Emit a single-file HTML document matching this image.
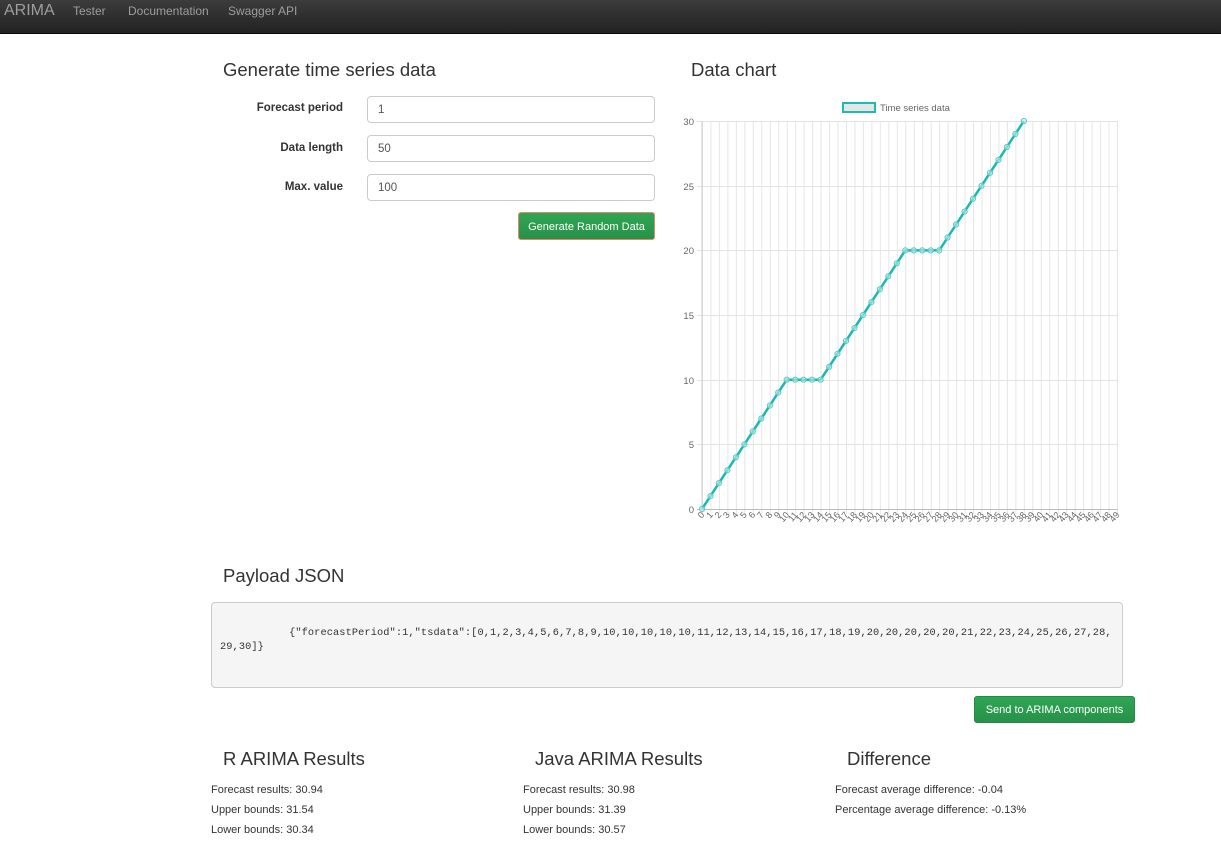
<!DOCTYPE html>
<html><head><meta charset="utf-8"><style>
body{margin:0;width:1221px;height:843px;background:#fff;font-family:"Liberation Sans",sans-serif;color:#333;position:relative;overflow:hidden}
.nav{position:absolute;left:0;top:0;width:1221px;height:33px;background:linear-gradient(#3c3c3c,#222);border-bottom:1px solid #080808}
.nav span{position:absolute;top:4px;color:#9d9d9d;font-size:12px}
.a{position:absolute;white-space:nowrap}
h2{position:absolute;margin:0;font-weight:normal;font-size:18.5px;color:#333;white-space:nowrap}
.lbl{position:absolute;font-size:11.5px;font-weight:bold;width:130px;text-align:right;left:213px}
.in{position:absolute;left:367px;width:286px;height:25px;border:1px solid #ccc;border-radius:4px;font-size:11.5px;line-height:27px;text-indent:10px;color:#555}
.btn{position:absolute;color:#fff;font-size:11px;text-align:center;border-radius:3px;background:linear-gradient(#2fa653,#27914a);border:1px solid #25874a}
.r{position:absolute;font-size:11px;color:#333}
</style></head><body>
<div class="nav">
<span style="left:4px;top:2px;font-size:16px;">ARIMA</span>
<span style="left:73px">Tester</span>
<span style="left:128px">Documentation</span>
<span style="left:228px">Swagger API</span>
</div>
<h2 style="left:223px;top:59px">Generate time series data</h2>
<h2 style="left:691px;top:59px">Data chart</h2>
<div class="lbl" style="top:102px">Forecast period</div>
<div class="lbl" style="top:142px">Data length</div>
<div class="lbl" style="top:181px">Max. value</div>
<div class="in" style="top:96px">1</div>
<div class="in" style="top:135px">50</div>
<div class="in" style="top:174px">100</div>
<div class="btn" style="left:518px;top:212px;width:135px;height:26px;line-height:28px;border-color:#e08a6a">Generate Random Data</div>

<svg style="position:absolute;left:680px;top:95px" width="450" height="440" viewBox="680 95 450 440">
<defs>
<pattern id="vg" patternUnits="userSpaceOnUse" x="702" y="0" width="8.4694" height="10"><line x1="0.5" y1="0" x2="0.5" y2="10" stroke="#e6e6e6" stroke-width="1"/></pattern>
<marker id="m" viewBox="0 0 8 8" refX="4" refY="4" markerWidth="8" markerHeight="8" markerUnits="userSpaceOnUse"><circle cx="4" cy="4" r="2.6" fill="rgba(200,235,233,.6)" stroke="#5cc9c2" stroke-width="1"/></marker>
</defs>
<rect x="701.5" y="121" width="417" height="393" fill="url(#vg)"/>
<g stroke="#e3e3e3" stroke-width="1">
<line x1="697" x2="1118" y1="121.5" y2="121.5"/><line x1="697" x2="1118" y1="186.5" y2="186.5"/><line x1="697" x2="1118" y1="250.5" y2="250.5"/><line x1="697" x2="1118" y1="315.5" y2="315.5"/><line x1="697" x2="1118" y1="380.5" y2="380.5"/><line x1="697" x2="1118" y1="444.5" y2="444.5"/>
</g>
<line x1="697" x2="1118" y1="509.5" y2="509.5" stroke="#bbb"/>
<line x1="702" x2="702" y1="121" y2="514" stroke="#ccc"/>
<g font-size="9.5" fill="#666" text-anchor="end" font-family="Liberation Sans,sans-serif">
<text x="694" y="125">30</text><text x="694" y="190">25</text><text x="694" y="254">20</text><text x="694" y="319">15</text><text x="694" y="384">10</text><text x="694" y="448">5</text><text x="694" y="513">0</text>
</g>
<rect x="843" y="103" width="32" height="9" fill="#e5e5e5" stroke="#1bbdb3" stroke-width="2"/>
<text x="880" y="111" font-size="9.5" fill="#666" font-family="Liberation Sans,sans-serif">Time series data</text>
<polyline fill="none" stroke="#17bab0" stroke-width="2.5" stroke-linejoin="round" marker-start="url(#m)" marker-mid="url(#m)" marker-end="url(#m)" points="702,509 710.5,496.1 718.9,483.1 727.4,470.2 735.9,457.3 744.4,444.4 752.8,431.4 761.3,418.5 769.8,405.6 778.2,392.6 786.7,379.7 795.2,379.7 803.6,379.7 812.1,379.7 820.6,379.7 829.1,366.8 837.5,353.8 846,340.9 854.5,328 862.9,315.1 871.4,302.1 879.9,289.2 888.3,276.3 896.8,263.3 905.3,250.4 913.8,250.4 922.2,250.4 930.7,250.4 939.2,250.4 947.6,237.5 956.1,224.5 964.6,211.6 973,198.7 981.5,185.8 990,172.8 998.5,159.9 1006.9,147 1015.4,134 1023.9,121"/>
<g font-size="9" fill="#666" font-family="Liberation Sans,sans-serif" text-anchor="end">
<text transform="translate(705,515) rotate(-50)">0</text><text transform="translate(713.5,515) rotate(-50)">1</text><text transform="translate(722,515) rotate(-50)">2</text><text transform="translate(730.4,515) rotate(-50)">3</text><text transform="translate(738.9,515) rotate(-50)">4</text><text transform="translate(747.4,515) rotate(-50)">5</text><text transform="translate(755.8,515) rotate(-50)">6</text><text transform="translate(764.3,515) rotate(-50)">7</text><text transform="translate(772.8,515) rotate(-50)">8</text><text transform="translate(781.2,515) rotate(-50)">9</text><text transform="translate(789.7,515) rotate(-50)">10</text><text transform="translate(798.2,515) rotate(-50)">11</text><text transform="translate(806.6,515) rotate(-50)">12</text><text transform="translate(815.1,515) rotate(-50)">13</text><text transform="translate(823.6,515) rotate(-50)">14</text><text transform="translate(832.1,515) rotate(-50)">15</text><text transform="translate(840.5,515) rotate(-50)">16</text><text transform="translate(849,515) rotate(-50)">17</text><text transform="translate(857.5,515) rotate(-50)">18</text><text transform="translate(865.9,515) rotate(-50)">19</text><text transform="translate(874.4,515) rotate(-50)">20</text><text transform="translate(882.9,515) rotate(-50)">21</text><text transform="translate(891.3,515) rotate(-50)">22</text><text transform="translate(899.8,515) rotate(-50)">23</text><text transform="translate(908.3,515) rotate(-50)">24</text><text transform="translate(916.8,515) rotate(-50)">25</text><text transform="translate(925.2,515) rotate(-50)">26</text><text transform="translate(933.7,515) rotate(-50)">27</text><text transform="translate(942.2,515) rotate(-50)">28</text><text transform="translate(950.6,515) rotate(-50)">29</text><text transform="translate(959.1,515) rotate(-50)">30</text><text transform="translate(967.6,515) rotate(-50)">31</text><text transform="translate(976,515) rotate(-50)">32</text><text transform="translate(984.5,515) rotate(-50)">33</text><text transform="translate(993,515) rotate(-50)">34</text><text transform="translate(1001.5,515) rotate(-50)">35</text><text transform="translate(1009.9,515) rotate(-50)">36</text><text transform="translate(1018.4,515) rotate(-50)">37</text><text transform="translate(1026.9,515) rotate(-50)">38</text><text transform="translate(1035.3,515) rotate(-50)">39</text><text transform="translate(1043.8,515) rotate(-50)">40</text><text transform="translate(1052.3,515) rotate(-50)">41</text><text transform="translate(1060.7,515) rotate(-50)">42</text><text transform="translate(1069.2,515) rotate(-50)">43</text><text transform="translate(1077.7,515) rotate(-50)">44</text><text transform="translate(1086.1,515) rotate(-50)">45</text><text transform="translate(1094.6,515) rotate(-50)">46</text><text transform="translate(1103.1,515) rotate(-50)">47</text><text transform="translate(1111.6,515) rotate(-50)">48</text><text transform="translate(1120,515) rotate(-50)">49</text>
</g>
</svg>

<h2 style="left:223px;top:565px">Payload JSON</h2>
<div class="a" style="left:211px;top:602px;width:910px;height:84px;background:#f5f5f5;border:1px solid #ccc;border-radius:4px"></div>
<div class="a" style="left:220px;top:626px;font-family:'Liberation Mono',monospace;font-size:10.3px;line-height:14px;letter-spacing:0.1px;color:#333">&nbsp;&nbsp;&nbsp;&nbsp;&nbsp;&nbsp;&nbsp;&nbsp;&nbsp;&nbsp;&nbsp;{"forecastPeriod":1,"tsdata":[0,1,2,3,4,5,6,7,8,9,10,10,10,10,10,11,12,13,14,15,16,17,18,19,20,20,20,20,20,21,22,23,24,25,26,27,28,<br>29,30]}</div>
<div class="btn" style="left:974px;top:696px;width:159px;height:25px;line-height:27px">Send to ARIMA components</div>

<h2 style="left:223px;top:748px">R ARIMA Results</h2>
<h2 style="left:535px;top:748px">Java ARIMA Results</h2>
<h2 style="left:847px;top:748px">Difference</h2>
<div class="r" style="left:211px;top:784px">Forecast results: 30.94</div>
<div class="r" style="left:211px;top:804px">Upper bounds: 31.54</div>
<div class="r" style="left:211px;top:824px">Lower bounds: 30.34</div>
<div class="r" style="left:523px;top:784px">Forecast results: 30.98</div>
<div class="r" style="left:523px;top:804px">Upper bounds: 31.39</div>
<div class="r" style="left:523px;top:824px">Lower bounds: 30.57</div>
<div class="r" style="left:835px;top:784px">Forecast average difference: -0.04</div>
<div class="r" style="left:835px;top:804px">Percentage average difference: -0.13%</div>
</body></html>
